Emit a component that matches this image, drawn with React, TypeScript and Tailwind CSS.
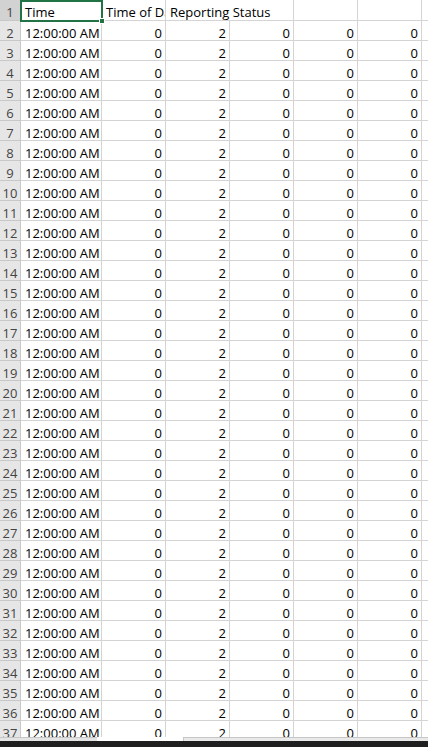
import React from "react";

const widths = [81, 64, 64, 64, 64, 64];

const rows = Array.from({ length: 36 }, (_, i) => ({
  n: i + 2,
  cells: ["12:00:00 AM", "0", "2", "0", "0", "0"],
}));

const Cell = ({ w, children, right, noBorder }: { w: number; children?: React.ReactNode; right?: boolean; noBorder?: boolean }) => (
  <div
    className={`h-full shrink-0 flex items-center pt-[6px] pl-[4px] pr-[3px] border-b border-[#d4d4d4] ${noBorder ? "" : "border-r"} ${
      right ? "justify-end" : "justify-start"
    } ${noBorder ? "overflow-visible" : "overflow-hidden"} whitespace-nowrap`}
    style={{ width: w }}
  >
    {children}
  </div>
);

const RowHeader = ({ n, selected }: { n: number; selected?: boolean }) => (
  <div
    className={`w-[21px] h-full shrink-0 flex items-center justify-center pt-[6px] border-r border-b border-[#c8c8c8] text-[#444] ${
      selected ? "bg-[#d2d2d2]" : "bg-[#e6e6e6]"
    }`}
  >
    {n}
  </div>
);

export default function App() {
  return (
    <div className="w-[428px] h-[747px] overflow-hidden bg-white flex flex-col font-['Open_Sans',sans-serif] text-[13px] text-black">
      <div className="h-[737px] overflow-hidden">
        {/* header row */}
        <div className="relative flex h-[21px]">
          <RowHeader n={1} selected />
          <Cell w={widths[0]}>Time</Cell>
          <Cell w={widths[1]}>Time of Day</Cell>
          <Cell w={widths[2]} noBorder>
            Reporting Status
          </Cell>
          <Cell w={widths[3]} />
          <Cell w={widths[4]} />
          <Cell w={widths[5]} />
          <Cell w={20} />
          {/* selection box on A1 */}
          <div className="absolute left-[20px] top-0 w-[83px] h-[22px] border-2 border-[#217346] pointer-events-none" />
          <div className="absolute left-[99px] top-[18px] w-[6px] h-[6px] bg-[#217346] border border-white" />
        </div>
        {rows.map((r) => (
          <div key={r.n} className="flex h-[20px]">
            <RowHeader n={r.n} />
            {r.cells.map((c, j) => (
              <Cell key={j} w={widths[j]} right={j > 0}>
                {c}
              </Cell>
            ))}
            <Cell w={20} />
          </div>
        ))}
      </div>
      {/* sheet tab / scroll strip */}
      <div className="flex h-[4px]">
        <div className="w-[97px] h-full bg-[#e4e4e4] border-t border-[#c6c6c6]" />
        <div className="w-[86px] h-full bg-white" />
        <div className="flex-1 h-full bg-[#e9e9e9] border-t border-l border-[#c6c6c6]" />
      </div>
      <div className="flex-1 bg-[#1f1f1f]" />
    </div>
  );
}
